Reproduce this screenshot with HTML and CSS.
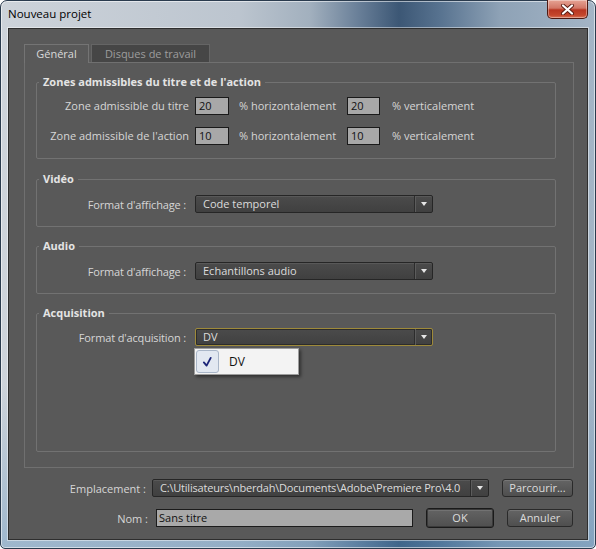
FILE: index.html
```html
<!DOCTYPE html>
<html lang="fr">
<head>
<meta charset="utf-8">
<title>Nouveau projet</title>
<link rel="stylesheet" href="styles.css">
</head>
<body>
<div class="window">
  <div class="titlebar">
    <span class="title">Nouveau projet</span>
    <div class="close">
      <svg width="15" height="11" viewBox="0 0 15 11">
        <path d="M3 1.5 L12 9.5 M12 1.5 L3 9.5" stroke="#5a1c12" stroke-width="4" stroke-linecap="round"/>
        <path d="M3 1.5 L12 9.5 M12 1.5 L3 9.5" stroke="#ffffff" stroke-width="2.2" stroke-linecap="round"/>
      </svg>
    </div>
  </div>
  <div class="client">
    <div class="tabs">
      <div class="tab active">Général</div>
      <div class="tab inactive">Disques de travail</div>
    </div>
    <div class="panel">
      <div class="group">
        <div class="legend">Zones admissibles du titre et de l'action</div>
        <div class="zone-grid">
          <div class="zlabel">Zone admissible du titre</div>
          <div><div class="num w34">20</div></div>
          <div class="ztext">% horizontalement</div>
          <div><div class="num w33">20</div></div>
          <div class="ztext">% verticalement</div>
          <div class="zlabel">Zone admissible de l'action</div>
          <div><div class="num w34">10</div></div>
          <div class="ztext">% horizontalement</div>
          <div><div class="num w33">10</div></div>
          <div class="ztext">% verticalement</div>
        </div>
      </div>
      <div class="group g-video">
        <div class="legend">Vidéo</div>
        <div class="field-row">
          <div class="flabel">Format d'affichage :</div>
          <div class="dd w238"><span class="val">Code temporel</span><span class="arrow"><i></i></span></div>
        </div>
      </div>
      <div class="group g-audio">
        <div class="legend">Audio</div>
        <div class="field-row">
          <div class="flabel">Format d'affichage :</div>
          <div class="dd w238"><span class="val">Echantillons audio</span><span class="arrow"><i></i></span></div>
        </div>
      </div>
      <div class="group g-acq">
        <div class="legend">Acquisition</div>
        <div class="field-row tight">
          <div class="flabel">Format d'acquisition :</div>
          <div class="dd w238 focus"><span class="val">DV</span><span class="arrow"><i></i></span>
            <div class="menu">
              <div class="check">
                <svg width="23" height="23" viewBox="0 0 23 23"><path d="M7.5 12.5 L10.5 16 L15 7.5" fill="none" stroke="#1b2478" stroke-width="2" stroke-linecap="round" stroke-linejoin="round"/></svg>
              </div>
              <span class="menu-text">DV</span>
            </div>
          </div>
        </div>
      </div>
    </div>
    <div class="bottom-row loc">
      <div class="blabel l-loc">Emplacement :</div>
      <div class="dd w337"><span class="val path">C:\Utilisateurs\nberdah\Documents\Adobe\Premiere Pro\4.0</span><span class="arrow"><i></i></span></div>
      <div class="btn b-browse">Parcourir...</div>
    </div>
    <div class="bottom-row name">
      <div class="blabel l-name">Nom :</div>
      <div class="text-input">Sans titre</div>
      <div class="btn b-ok">OK</div>
      <div class="btn b-cancel">Annuler</div>
    </div>
  </div>
</div>
</body>
</html>
```

FILE: styles.css
```css
* { box-sizing: border-box; }
html, body { margin: 0; padding: 0; }
body {
  width: 596px;
  height: 549px;
  overflow: hidden;
  background: #ffffff;
  font-family: "Open Sans", "Liberation Sans", sans-serif;
  font-size: 11px;
}

.window {
  width: 596px;
  height: 549px;
  display: flex;
  flex-direction: column;
  border: 1px solid #2a3b4e;
  border-radius: 7px 7px 5px 5px;
  padding: 0 7px 8px 7px;
  background:
    linear-gradient(180deg, rgba(255,255,255,0) 0%, rgba(255,255,255,0) 70%, rgba(70,130,180,0.35) 100%),
    linear-gradient(90deg, #cdd3da 0%, #bcc5cf 40%, #a2b0be 52%, #6a8099 60%, #3c5775 67%, #587390 74%, #8ea2b6 84%, #a4b5c6 100%);
  box-shadow: inset 0 0 0 1px rgba(255,255,255,0.55);
}

.titlebar {
  height: 27px;
  display: flex;
  align-items: flex-start;
}
.title {
  padding-top: 5px;
  font-family: "Open Sans", "Liberation Sans", sans-serif;
  font-size: 11.5px;
  line-height: 16px;
  color: #000000;
}
.close {
  margin-left: auto;
  margin-top: -1px;
  width: 41px;
  height: 19px;
  border: 1px solid #4d1a12;
  border-top: none;
  border-radius: 0 0 5px 5px;
  background: linear-gradient(180deg, #e6a394 0%, #d27766 45%, #b83621 55%, #c4472c 85%, #d9765a 100%);
  box-shadow: inset 0 0 0 1px rgba(255,255,255,0.35);
  display: flex;
  align-items: center;
  justify-content: center;
}

.client {
  width: 580px;
  height: 512px;
  border: 1px solid #2e2e2e;
  background: #595959;
  padding: 15px 13px 0 15px;
  box-shadow: 0 0 0 1px rgba(255,255,255,0.45);
  color: #d6d6d6;
}

.tabs {
  display: flex;
  align-items: flex-start;
  gap: 2px;
  height: 18px;
  position: relative;
  z-index: 1;
}
.tab {
  border: 1px solid #747474;
  border-bottom: none;
  text-align: center;
  line-height: 17px;
}
.tab.active {
  width: 65px;
  height: 19px;
  background: #595959;
  color: #dadada;
}
.tab.inactive {
  width: 119px;
  height: 18px;
  background: #464646;
  color: #9d9d9d;
  border-color: #656565;
}

.panel {
  height: 406px;
  border: 1px solid #707070;
  padding: 19px 17px 15px 11px;
  display: flex;
  flex-direction: column;
}

.group {
  border: 1px solid #727272;
  border-radius: 2px;
  padding-bottom: 13px;
  display: flex;
  flex-direction: column;
}
.g-video { margin-top: 20px; }
.g-audio { margin-top: 19px; }
.g-acq { margin-top: 19px; flex: 1; }

.legend {
  align-self: flex-start;
  margin: -8px 0 0 2px;
  padding: 0 4px 0 4px;
  background: #595959;
  font-weight: 700;
  color: #e4e4e4;
  line-height: 14px;
  font-size: 11px;
}

.zone-grid {
  margin-top: 8px;
  display: grid;
  grid-template-columns: 158px 44px 108px 45px auto;
  row-gap: 12px;
  align-items: center;
}
.zlabel {
  text-align: right;
  padding-right: 6px;
  line-height: 18px;
}
.ztext { line-height: 18px; }
.num {
  height: 18px;
  background: #a8a8a8;
  border: 1px solid #1a1a1a;
  color: #111111;
  padding-left: 3px;
  line-height: 16px;
}
.w34 { width: 34px; }
.w33 { width: 33px; }

.field-row {
  margin-top: 9px;
  display: flex;
  align-items: center;
}
.field-row.tight { margin-top: 8px; }
.flabel {
  width: 158px;
  padding-right: 9px;
  text-align: right;
  letter-spacing: -0.15px;
}

.dd {
  height: 18px;
  display: flex;
  border: 1px solid #262626;
  border-radius: 2px;
  background: linear-gradient(180deg, #4b4b4b 0%, #404040 100%);
  box-shadow: inset 0 1px 0 rgba(255,255,255,0.08);
  color: #dcdcdc;
  position: relative;
}
.dd.focus {
  border-color: #9e8a3a;
  box-shadow: inset 0 0 0 1px #2c2c2c;
}
.w238 { width: 238px; }
.w337 { width: 337px; }
.dd .val {
  flex: 1;
  padding-left: 7px;
  line-height: 16px;
  white-space: nowrap;
  overflow: hidden;
}
.dd .val.path { letter-spacing: -0.2px; }
.dd .arrow {
  width: 18px;
  border-left: 1px solid #2c2c2c;
  box-shadow: inset 1px 0 0 #5c5c5c;
  display: flex;
  align-items: center;
  justify-content: center;
}
.dd .arrow i {
  display: block;
  width: 0;
  height: 0;
  border-left: 3.5px solid transparent;
  border-right: 3.5px solid transparent;
  border-top: 4px solid #e6e6e6;
}

.menu {
  position: absolute;
  top: 19px;
  left: -2px;
  width: 105px;
  height: 27px;
  background: #f3f3f3;
  border: 1px solid #9c9c9c;
  box-shadow: 2px 2px 3px rgba(0,0,0,0.45);
  padding: 1px;
  display: flex;
  align-items: center;
  z-index: 5;
}
.check {
  width: 23px;
  height: 23px;
  border: 1px solid #a9b6c8;
  border-radius: 3px;
  background: #e2e8f1;
  display: flex;
  align-items: center;
  justify-content: center;
}
.menu-text {
  margin-left: 10px;
  color: #111111;
  font-size: 12px;
}

.bottom-row {
  display: flex;
  align-items: center;
}
.bottom-row.loc { margin-top: 11px; height: 18px; }
.bottom-row.name { margin-top: 11px; height: 20px; }
.blabel { text-align: right; }
.l-loc { width: 122px; margin-right: 6px; }
.l-name { width: 124px; margin-right: 8px; }

.btn {
  height: 18px;
  border: 1px solid #2a2a2a;
  border-radius: 3px;
  background: linear-gradient(180deg, #646464 0%, #4f4f4f 100%);
  box-shadow: inset 0 1px 0 rgba(255,255,255,0.12);
  color: #dcdcdc;
  text-align: center;
  line-height: 16px;
}
.b-browse { width: 71px; margin-left: 13px; }
.b-ok {
  width: 68px;
  height: 20px;
  margin-left: 13px;
  border-color: #1a1a1a;
  box-shadow: inset 0 0 0 1px #3a3a3a, inset 0 2px 0 rgba(255,255,255,0.1);
  line-height: 18px;
}
.b-cancel { width: 66px; margin-left: 13px; }

.text-input {
  width: 257px;
  height: 18px;
  background: #a9a9a9;
  border: 1px solid #1b1b1b;
  color: #111111;
  padding-left: 2px;
  line-height: 16px;
}
```
